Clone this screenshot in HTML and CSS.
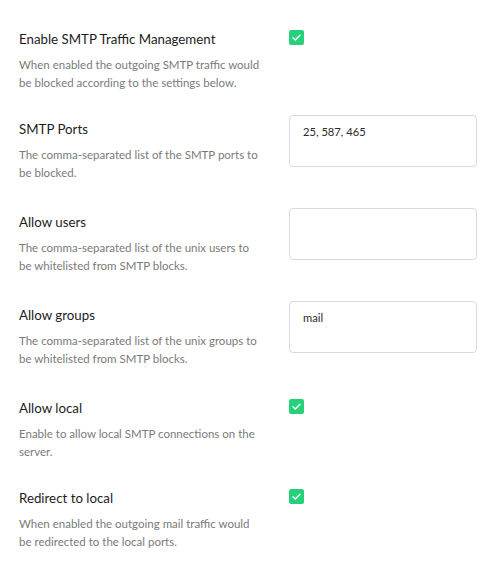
FILE: index.html
```html
<!DOCTYPE html>
<html>
<head>
<meta charset="utf-8">
<link rel="stylesheet" href="styles.css">
</head>
<body>
<div class="settings">
  <div class="row">
    <div class="info">
      <div class="title">Enable SMTP Traffic Management</div>
      <div class="desc">When enabled the outgoing SMTP traffic would be blocked according to the settings below.</div>
    </div>
    <div class="control"><span class="check"><svg viewBox="0 0 15 15" width="15" height="15"><path d="M4 7.8 L6.3 10 L11 5.2" fill="none" stroke="#fff" stroke-width="1.4" stroke-linecap="round" stroke-linejoin="round"/></svg></span></div>
  </div>
  <div class="row">
    <div class="info">
      <div class="title">SMTP Ports</div>
      <div class="desc">The comma-separated list of the SMTP ports to be blocked.</div>
    </div>
    <div class="control"><div class="input">25, 587, 465</div></div>
  </div>
  <div class="row">
    <div class="info">
      <div class="title">Allow users</div>
      <div class="desc">The comma-separated list of the unix users to be whitelisted from SMTP blocks.</div>
    </div>
    <div class="control"><div class="input"></div></div>
  </div>
  <div class="row">
    <div class="info">
      <div class="title">Allow groups</div>
      <div class="desc">The comma-separated list of the unix groups to be whitelisted from SMTP blocks.</div>
    </div>
    <div class="control"><div class="input">mail</div></div>
  </div>
  <div class="row">
    <div class="info">
      <div class="title">Allow local</div>
      <div class="desc">Enable to allow local SMTP connections on the server.</div>
    </div>
    <div class="control"><span class="check"><svg viewBox="0 0 15 15" width="15" height="15"><path d="M4 7.8 L6.3 10 L11 5.2" fill="none" stroke="#fff" stroke-width="1.4" stroke-linecap="round" stroke-linejoin="round"/></svg></span></div>
  </div>
  <div class="row">
    <div class="info">
      <div class="title">Redirect to local</div>
      <div class="desc">When enabled the outgoing mail traffic would be redirected to the local ports.</div>
    </div>
    <div class="control"><span class="check"><svg viewBox="0 0 15 15" width="15" height="15"><path d="M4 7.8 L6.3 10 L11 5.2" fill="none" stroke="#fff" stroke-width="1.4" stroke-linecap="round" stroke-linejoin="round"/></svg></span></div>
  </div>
</div>
</body>
</html>
```
FILE: styles.css
```css
html, body {
  margin: 0;
  padding: 0;
  background: #fff;
}
body {
  font-family: Lato, "Open Sans", sans-serif;
  color: #222;
}
.settings {
  padding: 29px 0 0 19px;
  display: flex;
  flex-direction: column;
  gap: 27px;
}
.row {
  display: grid;
  grid-template-columns: 241px 188px;
  column-gap: 29px;
  align-items: start;
}
.title {
  font-size: 13.3px;
  line-height: 20px;
  color: #1c1c1c;
}
.desc {
  margin-top: 7px;
  font-size: 11.5px;
  line-height: 18px;
  color: #7a7a7a;
}
.check {
  display: block;
  width: 15px;
  height: 15px;
  margin-top: 1px;
  background: #27d17c;
  border-radius: 2px;
}
.check svg {
  display: block;
}
.input {
  margin-top: -4px;
  margin-bottom: 18px;
  box-sizing: border-box;
  width: 188px;
  height: 52px;
  border: 1px solid #d7d9e6;
  border-radius: 4px;
  padding: 7px 13px;
  font-size: 11.2px;
  line-height: 18px;
  color: #2a2a2a;
}
```
